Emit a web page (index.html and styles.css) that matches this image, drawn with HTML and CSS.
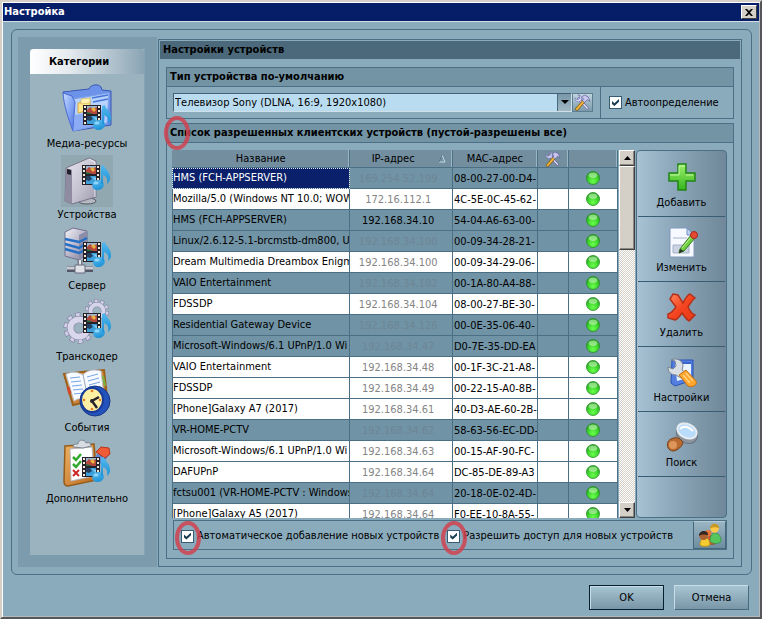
FILE: index.html
```html
<!DOCTYPE html>
<html lang="ru">
<head>
<meta charset="utf-8">
<title>Настройка</title>
<link rel="stylesheet" href="styles.css">
</head>
<body>
<svg class="defs" aria-hidden="true">
  <defs>
    <linearGradient id="blue" x1="0" y1="0" x2="1" y2="1"><stop offset="0" stop-color="#c9dcff"/><stop offset=".5" stop-color="#86a8f4"/><stop offset="1" stop-color="#4c6fe0"/></linearGradient>
    <linearGradient id="steel" x1="0" y1="0" x2="1" y2="1"><stop offset="0" stop-color="#f4f3f9"/><stop offset=".5" stop-color="#b9b6c9"/><stop offset="1" stop-color="#807d96"/></linearGradient>
    <linearGradient id="plate" x1="0" y1="0" x2="1" y2="1"><stop offset="0" stop-color="#e9e7f0"/><stop offset=".6" stop-color="#c3c0cf"/><stop offset="1" stop-color="#9c99ac"/></linearGradient>
    <linearGradient id="green" x1="0" y1="0" x2="0" y2="1"><stop offset="0" stop-color="#9cf06a"/><stop offset="1" stop-color="#35b51c"/></linearGradient>
    <linearGradient id="red" x1="0" y1="0" x2="1" y2="1"><stop offset="0" stop-color="#ff8a63"/><stop offset=".5" stop-color="#f4441f"/><stop offset="1" stop-color="#e63a18"/></linearGradient>
    <linearGradient id="wood" x1="0" y1="0" x2="1" y2="1"><stop offset="0" stop-color="#f0b263"/><stop offset="1" stop-color="#b9671d"/></linearGradient>
    <linearGradient id="note" x1="0" y1="0" x2="0" y2="1"><stop offset="0" stop-color="#55b8ee"/><stop offset="1" stop-color="#1c92d6"/></linearGradient>
    <radialGradient id="ball" cx=".5" cy=".75" r=".7"><stop offset="0" stop-color="#6bff4e"/><stop offset=".6" stop-color="#3bd22a"/><stop offset="1" stop-color="#229a1c"/></radialGradient>
  </defs>
  <symbol id="media" viewBox="0 0 32 32">
    <rect width="18" height="20" fill="#25222b"/>
    <path d="M2 1v18M16 1v18" stroke="#f4ead9" stroke-width="2" stroke-dasharray="2 2"/>
    <path d="M4 1h10v8H4z" fill="#9db8cf"/><path d="M4 5l3-3 3 2 4-2v7H4z" fill="#b5473c"/><path d="M8 4l3-2 2 3-2 2z" fill="#e8b33f"/><path d="M4 7l4 1 2 1H4z" fill="#2b6a3f"/>
    <path d="M4 11h10v8H4z" fill="#3d9fda"/><path d="M4 11h4l2 3-3 2-3-1z" fill="#25405f"/><path d="M10 12l4 1v3z" fill="#8bd0f2"/>
    <ellipse cx="16" cy="20" rx="6" ry="5" transform="rotate(-18 16 20)" fill="url(#note)"/>
    <path d="M19 19V1l3-1c0 4 7 6 6 15-1 2-2 3-3 4 1-5 0-7-4-9v9z" fill="url(#note)"/>
    <ellipse cx="14" cy="18" rx="2.500" ry="1.500" fill="#8ed5f8"/>
  </symbol>
  <symbol id="tools" viewBox="0 0 18 18">
    <path d="M5 5l9 10" stroke="#6a67a8" stroke-width="3" stroke-linecap="round"/>
    <path d="M5 5l9 10" stroke="#e4e2f8" stroke-width="1.500" stroke-linecap="round"/>
    <path d="M1 4l2 2 3-1V2L4 1c3 0 5 2 4 5L6 8C3 9 1 7 1 4z" fill="#d9d8f4" stroke="#716eb0" stroke-width=".7"/>
    <path d="M3 16l7-8" stroke="#8b5b14" stroke-width="3.500" stroke-linecap="round"/>
    <path d="M3 16l7-8" stroke="#f1b93b" stroke-width="2" stroke-linecap="round"/>
    <path d="M8 4l3-3 4 2 2 5-3-2-3 3-2-2 1-2z" fill="#c9c7ee" stroke="#66639f" stroke-width=".8"/>
  </symbol>
  <symbol id="dot" viewBox="0 0 14 14">
    <circle cx="7" cy="7" r="6.500" fill="url(#ball)" stroke="#278f2a" stroke-width=".8"/>
    <ellipse cx="7" cy="4.200" rx="4.300" ry="2.700" fill="#c8f7bd" opacity=".6"/>
  </symbol>
</svg>

<div class="window">
  <header class="titlebar">
    <h1>Настройка</h1>
    <button class="close" aria-label="Закрыть"><svg viewBox="0 0 8 7"><path d="M0 0h2l2 2 2-2h2L5 3.500 8 7H6L4 5 2 7H0l3-3.500z"/></svg></button>
  </header>

  <main class="frame">
    <nav class="sidebar" aria-label="Категории">
      <div class="categories">
        <h2>Категории</h2>
        <a class="category" href="#media-resources">
          <svg class="pic" viewBox="0 0 52 52">
            <path d="M2 8c3-1 6 0 8-1l18-2c1-4 9-6 12-2l1 3 9 1v34l-38 6z" fill="#6c92ea" stroke="#3a57b5"/>
            <path d="M12 15l36-6-2 30-34 8z" fill="#b7d2fb" stroke="#7da0ea"/>
            <path d="M31 14l16-3M32 18l15-3" stroke="#4674d8" stroke-width="1.500"/>
            <path d="M2 9l9 3 3 6-2 29C7 34 3 22 2 9z" fill="url(#blue)" stroke="#4a6bd2"/>
            <path d="M14 31l32-6-3 15-31 7z" fill="#7fa3f2" opacity=".8"/>
            <path d="M17 19l12-2v9l-12 3z" fill="#ffe68d" stroke="#d1a94b"/><path d="M20 15l9-1v5l-9 1z" fill="#fff2ae" stroke="#d1a94b" stroke-width=".6"/>
            <use href="#media" x="22" y="21" width="32" height="32"/>
          </svg>
          <span>Медиа-ресурсы</span>
        </a>
        <a class="category current" href="#devices" aria-current="page">
          <svg class="pic" viewBox="0 0 52 52">
            <ellipse cx="26" cy="46" rx="9" ry="3" fill="#b7b9c0" stroke="#555965"/>
            <path d="M5 13L28 3l7 3v36L11 49l-7-3z" fill="url(#plate)" stroke="#77748b"/>
            <path d="M5 13l6 2v34l-7-3z" fill="#8f8ba0"/><path d="M6 14l4 1v5l-4-1z" fill="#23222c"/>
            <path d="M28 4l6 3v35" fill="none" stroke="#fff" opacity=".7"/>
            <use href="#media" x="21" y="10" width="32" height="32"/>
          </svg>
          <span>Устройства</span>
        </a>
        <a class="category" href="#server">
          <svg class="pic" viewBox="0 0 52 52">
            <path d="M4 6l8-4 14 3v23l-8 6-14-4z" fill="url(#steel)" stroke="#73708e"/>
            <path d="M18 9l8-4v23l-8 6z" fill="#8c8da9"/>
            <path d="M4 13l14 3 8-4M4 18l14 4 8-5M4 23l14 4 8-4" fill="none" stroke="#246fc6" stroke-width="2.500"/>
            <path d="M19 34v8" stroke="#777a8b" stroke-width="5"/><path d="M19 34v8" stroke="#e5e6ec" stroke-width="2"/>
            <path d="M6 43h26" stroke="#555868" stroke-width="6"/><path d="M6 42h26" stroke="#c9ccd5" stroke-width="3"/>
            <path d="M14 39h10v8H14z" fill="#dfe0e8" stroke="#676a7d"/>
            <use href="#media" x="22" y="16" width="32" height="32"/>
          </svg>
          <span>Сервер</span>
        </a>
        <a class="category" href="#transcoder">
          <svg class="pic" viewBox="0 0 52 52">
            <g fill="none"><circle cx="36" cy="14" r="10" stroke="#7f7da4" stroke-width="4" stroke-dasharray="4 2.280"/><circle cx="36" cy="14" r="10" stroke="#d1cfe6" stroke-width="3" stroke-dasharray="3 3.280" stroke-dashoffset="-.5"/><circle cx="36" cy="14" r="6.500" stroke="#7f7da4" stroke-width="5"/><circle cx="36" cy="14" r="6.500" stroke="#d6d4e9" stroke-width="4"/>
            <circle cx="18" cy="31" r="13" stroke="#77759b" stroke-width="5" stroke-dasharray="5 3.160"/><circle cx="18" cy="31" r="13" stroke="#d1cfe6" stroke-width="4" stroke-dasharray="4 4.160" stroke-dashoffset="-.5"/><circle cx="18" cy="31" r="8.500" stroke="#7a789d" stroke-width="7"/><circle cx="18" cy="31" r="8.500" stroke="#d9d7eb" stroke-width="6"/></g>
            <use href="#media" x="22" y="16" width="32" height="32"/>
          </svg>
          <span>Транскодер</span>
        </a>
        <a class="category" href="#events">
          <svg class="pic" viewBox="0 0 52 52">
            <path d="M3 6l18-2 22-2 3 27-34 8z" fill="url(#wood)" stroke="#9b611b" stroke-width="2"/>
            <path d="M5 6c7-3 12-2 17 1 4-5 11-6 18-4l3 24c-7-1-11 1-16 5-5-3-9-2-14 1z" fill="#f7faff" stroke="#b9bfc9"/>
            <path d="M22 6l5 26" stroke="#9ba8b9"/><path d="M9 10l10-1M10 14l10-1M11 18l10-1M12 22l10-1M13 26l9-1M26 9l11-3M27 13l11-3M28 17l11-3" stroke="#75a6e7"/>
            <path d="M7 19l2 7" stroke="#d14a29" stroke-width="3"/><path d="M42 8l2 10" stroke="#79b53e" stroke-width="2"/>
            <circle cx="34" cy="33" r="15" fill="#2452bd" stroke="#173786"/><ellipse cx="31" cy="32" rx="11" ry="12" fill="#fff0a3" stroke="#193c98" stroke-width="2"/>
            <circle cx="31" cy="23" r="1.300" fill="#e57d21"/><circle cx="39" cy="32" r="1.300" fill="#e57d21"/><circle cx="31" cy="41" r="1.300" fill="#e57d21"/><circle cx="23" cy="32" r="1.300" fill="#e57d21"/>
            <path d="M38 29l-7 4 5 7" fill="none" stroke="#27242c" stroke-width="2.500"/><circle cx="31" cy="33" r="2" fill="#27242c"/>
          </svg>
          <span>События</span>
        </a>
        <a class="category" href="#extra">
          <svg class="pic" viewBox="0 0 52 52">
            <path d="M4 7l29-2 3 36L7 47c-3 0-4-2-4-5z" fill="url(#wood)" stroke="#945c1b" stroke-width="1.500"/>
            <path d="M9 10l22-2 2 29-23 5z" fill="#fff" stroke="#b6b6bd"/>
            <path d="M12 8c0-3 3-3 5-3 0-5 7-5 8-1 3-1 5 0 5 3l-8 2z" fill="#d8dde4" stroke="#7f8791"/>
            <path d="M12 18l3 3 5-6M12 25l3 3 5-6" fill="none" stroke="#32a82f" stroke-width="2.500"/><path d="M12 31l6 6m0-6l-6 6" stroke="#cb2828" stroke-width="2"/>
            <path d="M32 20l9-10 7 6-7 10z" fill="#6487cf"/><path d="M35 13l5-5 8 1 1 6-5 4z" fill="#ef5b36" stroke="#b8341d"/>
            <use href="#media" x="21" y="18" width="32" height="32"/>
          </svg>
          <span>Дополнительно</span>
        </a>
      </div>
    </nav>

    <section class="content">
      <h2 class="content-title">Настройки устройств</h2>

      <section class="group">
        <h3><label for="device-type">Тип устройства по-умолчанию</label></h3>
        <div class="type-row">
          <div class="picker">
            <select id="device-type"><option>Телевизор Sony (DLNA, 16:9, 1920x1080)</option></select>
            <span class="drop"></span>
          </div>
          <button class="tool-button" aria-label="Параметры устройства"><svg viewBox="0 0 18 18"><use href="#tools"/></svg></button>
          <label class="check auto"><input type="checkbox" checked><span>Автоопределение</span></label>
        </div>
      </section>

      <section class="group devices">
        <h3><i class="mark"></i>Список разрешенных клиентских устройств (пустой-разрешены все)</h3>
        <div class="devices-body">
          <div class="list">
            <div class="table-clip">
              <table>
                <colgroup><col class="c-name"><col class="c-ip"><col class="c-mac"><col class="c-tool"><col class="c-state"></colgroup>
                <thead><tr><th>Название</th><th><span class="sorted">IP-адрес<svg viewBox="0 0 8 9"><path d="M4 1L1 8h6z" fill="none" stroke="#c5dce6"/><path d="M4 1L1 8" stroke="#48687a"/></svg></span></th><th>MAC-адрес</th><th><svg class="th-icon" viewBox="0 0 18 18"><use href="#tools"/></svg></th><th></th></tr></thead>
                <tbody>
                  <tr class="off selected"><td>HMS (FCH-APPSERVER)</td><td>169.254.52.199</td><td>08-00-27-00-D4-</td><td></td><td><svg class="dot"><use href="#dot"/></svg></td></tr>
                  <tr><td>Mozilla/5.0 (Windows NT 10.0; WOW</td><td>172.16.112.1</td><td>4C-5E-0C-45-62-</td><td></td><td><svg class="dot"><use href="#dot"/></svg></td></tr>
                  <tr class="off online"><td>HMS (FCH-APPSERVER)</td><td>192.168.34.10</td><td>54-04-A6-63-00-</td><td></td><td><svg class="dot"><use href="#dot"/></svg></td></tr>
                  <tr class="off"><td>Linux/2.6.12-5.1-brcmstb-dm800, U</td><td>192.168.34.100</td><td>00-09-34-28-21-</td><td></td><td><svg class="dot"><use href="#dot"/></svg></td></tr>
                  <tr><td>Dream Multimedia Dreambox Enigma</td><td>192.168.34.100</td><td>00-09-34-29-06-</td><td></td><td><svg class="dot"><use href="#dot"/></svg></td></tr>
                  <tr class="off"><td>VAIO Entertainment</td><td>192.168.34.102</td><td>00-1A-80-A4-88-</td><td></td><td><svg class="dot"><use href="#dot"/></svg></td></tr>
                  <tr><td>FDSSDP</td><td>192.168.34.104</td><td>08-00-27-BE-30-</td><td></td><td><svg class="dot"><use href="#dot"/></svg></td></tr>
                  <tr class="off"><td>Residential Gateway Device</td><td>192.168.34.126</td><td>00-0E-35-06-40-</td><td></td><td><svg class="dot"><use href="#dot"/></svg></td></tr>
                  <tr class="off"><td>Microsoft-Windows/6.1 UPnP/1.0 Wi</td><td>192.168.34.47</td><td>D0-7E-35-DD-EA</td><td></td><td><svg class="dot"><use href="#dot"/></svg></td></tr>
                  <tr><td>VAIO Entertainment</td><td>192.168.34.48</td><td>00-1F-3C-21-A8-</td><td></td><td><svg class="dot"><use href="#dot"/></svg></td></tr>
                  <tr><td>FDSSDP</td><td>192.168.34.49</td><td>00-22-15-A0-8B-</td><td></td><td><svg class="dot"><use href="#dot"/></svg></td></tr>
                  <tr><td>[Phone]Galaxy A7 (2017)</td><td>192.168.34.61</td><td>40-D3-AE-60-2B-</td><td></td><td><svg class="dot"><use href="#dot"/></svg></td></tr>
                  <tr class="off"><td>VR-HOME-PCTV</td><td>192.168.34.62</td><td>58-63-56-EC-DD-</td><td></td><td><svg class="dot"><use href="#dot"/></svg></td></tr>
                  <tr><td>Microsoft-Windows/6.1 UPnP/1.0 Wi</td><td>192.168.34.63</td><td>00-15-AF-90-FC-</td><td></td><td><svg class="dot"><use href="#dot"/></svg></td></tr>
                  <tr><td>DAFUPnP</td><td>192.168.34.64</td><td>DC-85-DE-89-A3</td><td></td><td><svg class="dot"><use href="#dot"/></svg></td></tr>
                  <tr class="off"><td>fctsu001 (VR-HOME-PCTV : Windows</td><td>192.168.34.64</td><td>20-18-0E-02-4D-</td><td></td><td><svg class="dot"><use href="#dot"/></svg></td></tr>
                  <tr><td>[Phone]Galaxy A5 (2017)</td><td>192.168.34.64</td><td>F0-EE-10-8A-55-</td><td></td><td><svg class="dot"><use href="#dot"/></svg></td></tr>
                </tbody>
              </table>
            </div>
            <div class="scroll">
              <button class="raised" aria-label="Вверх"><svg viewBox="0 0 7 4"><path d="M0 4l3.500-4L7 4z"/></svg></button>
              <div class="raised thumb"></div>
              <div class="track"></div>
              <button class="raised" aria-label="Вниз"><svg viewBox="0 0 7 4"><path d="M0 0l3.500 4L7 0z"/></svg></button>
            </div>
          </div>

          <div class="actions">
            <button><svg viewBox="0 0 32 32"><path d="M12 3h8v9h9v8h-9v9h-8v-9H3v-8h9z" fill="url(#green)" stroke="#218516" stroke-width="1.500"/><path d="M13 5h6M4 14h9V5M20 14h7" fill="none" stroke="#c5f7a5"/></svg><span>Добавить</span></button>
            <button><svg viewBox="0 0 32 32"><path d="M4 2h17l7 7v22H4z" fill="#f6f9ff" stroke="#8197bc"/><path d="M21 2v7h7z" fill="#bccff0" stroke="#7791bf"/><path d="M7 12h14M7 19h16v8H7z" fill="#ccd4e4" stroke="#a6b2ca"/><path d="M14 23l11-14 4 3-11 13-5 2z" fill="#6fd03f" stroke="#347b20"/><path d="M16 22L26 10" stroke="#c3f296"/><circle cx="28" cy="9" r="3.500" fill="#e54b32" stroke="#a92518"/><path d="M14 23l4 2-5 2z" fill="#2c3129"/></svg><span>Изменить</span></button>
            <button><svg viewBox="0 0 32 32"><path d="M7 3l5 1 5 8c2-4 4-8 7-9l5 4c-4 3-5 6-7 9 2 4 4 7 7 8l-6 6c-3-2-5-5-7-8-2 3-4 6-7 7l-7-2v-4c4-1 6-4 8-7L4 8z" fill="url(#red)" stroke="#b5311a" stroke-width="1.500"/></svg><span>Удалить</span></button>
            <button><svg viewBox="0 0 32 32"><path d="M6 4h21v20l-18 6-4-3z" fill="#547fe0" stroke="#2953b5"/><path d="M9 7h16v14l-14 4z" fill="#eaf4ff"/><path d="M9 7h16" stroke="#3a64c9" stroke-width="2"/><path d="M2 11l5 2 3-3-1-5-4-1c6-3 12 1 12 6l-1 4 4 3-5 5-5-3c-5 0-8-3-8-8z" fill="#d9dee5" stroke="#7a838f"/><path d="M13 19l7-5 10 11c2 4-4 7-8 5z" fill="#ffa52b" stroke="#c27214"/><path d="M17 19l7 8M20 17l7 8" stroke="#ffd27c" stroke-width="1.500"/></svg><span>Настройки</span></button>
            <button><svg viewBox="0 0 32 32"><path d="M11 14l8 1-3 8-8-3z" fill="#d4d8de" stroke="#777e88"/><ellipse cx="21" cy="13" rx="11" ry="9" transform="rotate(32 21 13)" fill="#8c949e" stroke="#68727d"/><ellipse cx="21" cy="10" rx="10" ry="7" transform="rotate(24 21 10)" fill="#b9dcfa" stroke="#e7ecf1" stroke-width="2"/><path d="M14 8c4-4 9-2 13 2" fill="none" stroke="#fff" stroke-width="2"/><path d="M2 21c1-3 8-6 12-3l3 3c0 4-6 9-10 9s-7-5-5-9z" fill="#b86a31" stroke="#784019"/><ellipse cx="7" cy="24" rx="4" ry="4" fill="#dc9659"/></svg><span>Поиск</span></button>
          </div>
        </div>

        <div class="options">
          <label class="check add"><input type="checkbox" checked><i class="mark"></i><span>Автоматическое добавление новых устройств</span></label>
          <label class="check"><input type="checkbox" checked><i class="mark"></i><span>Разрешить доступ для новых устройств</span></label>
          <button class="users" aria-label="Пользователи"><svg viewBox="0 0 26 26"><path d="M9 23c0-7 3-10 7-9l2 9z" fill="#e0582f" stroke="#953919" stroke-width=".7"/><circle cx="11" cy="11" r="3.500" fill="#e77537"/><path d="M13 20c0-8 3-9 6-9s6 3 6 9c-3 3-9 3-12 0z" fill="#54c65b" stroke="#2c8641" stroke-width=".7"/><circle cx="18" cy="6" r="4.500" fill="#ffc948"/><path d="M13 6c0-7 10-7 10 0-3-2-7-2-10 0z" fill="#c79822"/><path d="M2 24c0-6 3-8 6-8s5 3 5 8c-3 2-8 2-11 0z" fill="#f3ca30" stroke="#a67b17" stroke-width=".7"/><circle cx="6" cy="14" r="4.500" fill="#ad6131"/><path d="M1 14c0-7 10-7 10-1-4-1-7-1-10 1z" fill="#332520"/></svg></button>
        </div>
      </section>
    </section>
  </main>

  <footer class="dialog-buttons">
    <button class="default">OK</button>
    <button>Отмена</button>
  </footer>
</div>
</body>
</html>
```
FILE: styles.css
```css
* { box-sizing: border-box; }

:root {
  --face: #8aabbc;
  --line: #4b6f84;
  --row: #7093a5;
  --head: #7394a5;
}

body {
  margin: 0;
  font: 11px/14px "DejaVu Sans Condensed", "DejaVu Sans", sans-serif;
  color: #000;
}

button, select, input { font: inherit; color: inherit; margin: 0; }
h1, h2, h3 { margin: 0; font-size: 11px; font-weight: bold; }
button { padding: 0; }
.defs { position: absolute; width: 0; height: 0; }

.window {
  height: 100vh;
  min-height: 600px;
  display: flex;
  flex-direction: column;
  padding: 1px;
  background: var(--face);
  border: 2px solid;
  border-color: #d4d0c8 #55565a #55565a #d4d0c8;
  box-shadow: inset 1px 1px #fff, inset -1px -1px #b4b8ba;
}

.titlebar {
  display: flex;
  align-items: center;
  justify-content: space-between;
  height: 19px;
  padding: 0 2px 0 1px;
  background: #061d68;
  border-bottom: 1px solid #d4e0e6;
  color: #fff;
}

.close {
  width: 16px;
  height: 14px;
  display: grid;
  place-items: center;
  background: #d4d0c8;
  border: 1px solid;
  border-color: #fff #404040 #404040 #fff;
}
.close svg { width: 8px; height: 7px; }

.frame {
  flex: 1;
  min-height: 0;
  display: flex;
  gap: 1px;
  margin: 7px 7px 0 8px;
  padding: 7px 9px 7px 6px;
  border: 1px solid var(--line);
  border-radius: 6px;
}

.sidebar {
  flex: 0 0 139px;
  padding: 12px;
  background: #7c9bad;
}
.categories {
  height: 100%;
  background: #9bb3be;
  border-right: 1px solid #88a5b4;
}
.categories h2 {
  height: 25px;
  margin-bottom: 10px;
  padding-left: 19px;
  line-height: 26px;
  border-radius: 4px 4px 0 0;
  background: linear-gradient(90deg, #fff, #e4eaee 35%, #8aa4b4);
}
.category {
  display: flex;
  flex-direction: column;
  align-items: center;
  height: 71px;
  color: inherit;
  text-decoration: none;
  white-space: nowrap;
}
.pic { width: 52px; height: 52px; flex: none; }
.category span { line-height: 16px; }
.current .pic { background: #91a8b1; }

.content {
  flex: 1;
  min-width: 0;
  display: flex;
  flex-direction: column;
  margin-top: 2px;
  padding: 1px 1px 7px;
  border: 1px solid var(--line);
}
.content-title {
  height: 18px;
  margin-bottom: 8px;
  padding-left: 3px;
  line-height: 18px;
  background: #4b697a;
}

.group {
  margin: 0 6px;
  border: 1px solid var(--line);
}
.group h3 {
  position: relative;
  height: 19px;
  padding-left: 3px;
  line-height: 18px;
  background: var(--head);
  border-bottom: 1px solid var(--line);
}

.type-row { display: flex; align-items: center; height: 31px; padding-left: 6px; }
.picker {
  position: relative;
  flex: 1;
  height: 19px;
}
.picker select {
  width: 100%;
  height: 100%;
  padding: 0 1px;
  appearance: none;
  border: 1px solid;
  border-color: #416275 #d0e0e8 #d0e0e8 #416275;
  border-radius: 0;
  background: #badcf0;
}
.drop {
  position: absolute;
  inset: 1px 1px 1px auto;
  width: 14px;
  border-left: 1px solid #476a7e;
  background: linear-gradient(#7897a8, #a1b9c5);
  pointer-events: none;
}
.drop::before {
  content: "";
  position: absolute;
  left: 3px;
  top: 6px;
  border: 4px solid transparent;
  border-top-color: #000;
}
.tool-button {
  width: 21px;
  height: 19px;
  margin-right: 7px;
  border: 1px solid #5d7e90;
  background: linear-gradient(#c0d5df, #7a9aab);
  display: grid;
  place-items: center;
}
.tool-button svg { width: 17px; height: 17px; }

.check { position: relative; display: flex; align-items: center; white-space: nowrap; }
.check input {
  width: 13px;
  height: 13px;
  margin-right: 3px;
  appearance: none;
  display: grid;
  place-items: center;
  border: 1px solid #365b72;
  background: #fff;
}
.check input:checked::before {
  content: "";
  width: 7px;
  height: 7px;
  background: #183c50;
  clip-path: polygon(0 28%, 35% 60%, 100% 0, 100% 40%, 35% 100%, 0 70%);
}
.auto {
  align-self: stretch;
  flex: 0 0 133px;
  padding-left: 8px;
  border-left: 1px solid var(--line);
}

.devices {
  flex: 1;
  min-height: 0;
  display: flex;
  flex-direction: column;
  margin-top: 4px;
  padding-bottom: 8px;
}
.devices h3 { flex: none; }
.devices-body {
  flex: 1;
  min-height: 0;
  display: flex;
  gap: 1px;
  padding: 7px 6px 2px 5px;
}
.list { flex: 1; min-width: 0; display: flex; }
.table-clip { flex: 1; min-width: 0; height: 100%; overflow: hidden; }

table { width: 100%; table-layout: fixed; border-collapse: separate; border-spacing: 0; }
.c-name { width: 40%; }
.c-ip { width: 23%; }
.c-mac { width: 19%; }
.c-tool { width: 7%; }
.c-state { width: 11%; }
th, td {
  overflow: hidden;
  white-space: nowrap;
  border-right: 1px solid var(--line);
  border-bottom: 1px solid var(--line);
}
th {
  height: 18px;
  padding: 0;
  font-weight: normal;
  line-height: 16px;
  background: #738e9f;
  box-shadow: inset -1px 0 #9bb6c3;
}
.sorted { display: flex; align-items: center; justify-content: center; gap: 23px; padding-left: 15px; }
.sorted svg { width: 8px; height: 9px; }
.th-icon { display: block; width: 16px; height: 16px; margin: 0 auto; }
td { height: 21px; padding: 0 0 0 1px; background: #fff; }
td:first-child { padding-left: 0; border-left: 1px solid var(--line); }
td:nth-child(2) { text-align: center; padding: 2px 6px 0 0; color: #858585; }
td:nth-child(3) { padding-top: 2px; }
.off td { background: var(--row); }
.off td:nth-child(2) { color: #6e8695; }
.off.online td:nth-child(2) { color: #000; }
.off.selected td:first-child {
  background: #0a206b;
  color: #fff;
  outline: 1px dotted #dfe5f5;
  outline-offset: -1px;
}
.dot { display: block; width: 14px; height: 14px; margin: 0 auto; }

.scroll { flex: 0 0 16px; display: flex; flex-direction: column; margin-left: 1px; }
.raised {
  height: 16px;
  display: grid;
  place-items: center;
  background: #d4d0c8;
  border: 1px solid;
  border-color: #fff #404040 #404040 #fff;
  box-shadow: inset -1px -1px #8a8883;
}
.raised svg { width: 7px; height: 4px; }
.thumb { height: 84px; }
.track { flex: 1; background: repeating-conic-gradient(#fff 0 25%, #d4d0c8 0 50%) 0 0 / 2px 2px; }

.actions {
  flex: 0 0 91px;
  padding: 1px;
  border: 1px solid var(--line);
  border-radius: 4px;
  background: linear-gradient(90deg, #a6c2d3, #8fabbd 35%, #6f8799);
}
.actions button {
  display: flex;
  flex-direction: column;
  align-items: center;
  gap: 3px;
  width: 100%;
  height: 65px;
  padding-top: 9px;
  border: 0;
  border-bottom: 1px solid #385c71;
  background: none;
}
.actions svg { width: 32px; height: 32px; }

.options {
  display: flex;
  align-items: center;
  height: 30px;
  margin: 0 6px;
  padding-left: 7px;
  border: 1px solid var(--line);
}
.options .check { top: 1px; }
.add { margin-right: 8px; }
.users {
  width: 33px;
  height: 28px;
  margin-left: auto;
  display: grid;
  place-items: center;
  border: 1px solid;
  border-color: #b3cad5 #456779 #456779;
  background: linear-gradient(#9ab5c3, #6d8d9f);
}
.users svg { width: 24px; height: 24px; }

/* Red rings that call out the important settings */
.mark {
  position: absolute;
  left: -6px;
  top: -8px;
  width: 26px;
  height: 34px;
  border: 4px solid #d0414f;
  border-radius: 50%;
  opacity: .85;
  pointer-events: none;
}
h3 .mark { left: -3px; }

.dialog-buttons {
  display: flex;
  justify-content: flex-end;
  gap: 10px;
  padding: 10px 10px 6px;
}
.dialog-buttons button {
  width: 75px;
  height: 25px;
  border: 1px solid;
  border-color: #c7dce6 #486a7d #486a7d #c7dce6;
  background: linear-gradient(#a8c5d3, #7896a7);
}
.dialog-buttons .default { border-color: #06202f; box-shadow: inset 1px 1px #c7dce6; }
```
